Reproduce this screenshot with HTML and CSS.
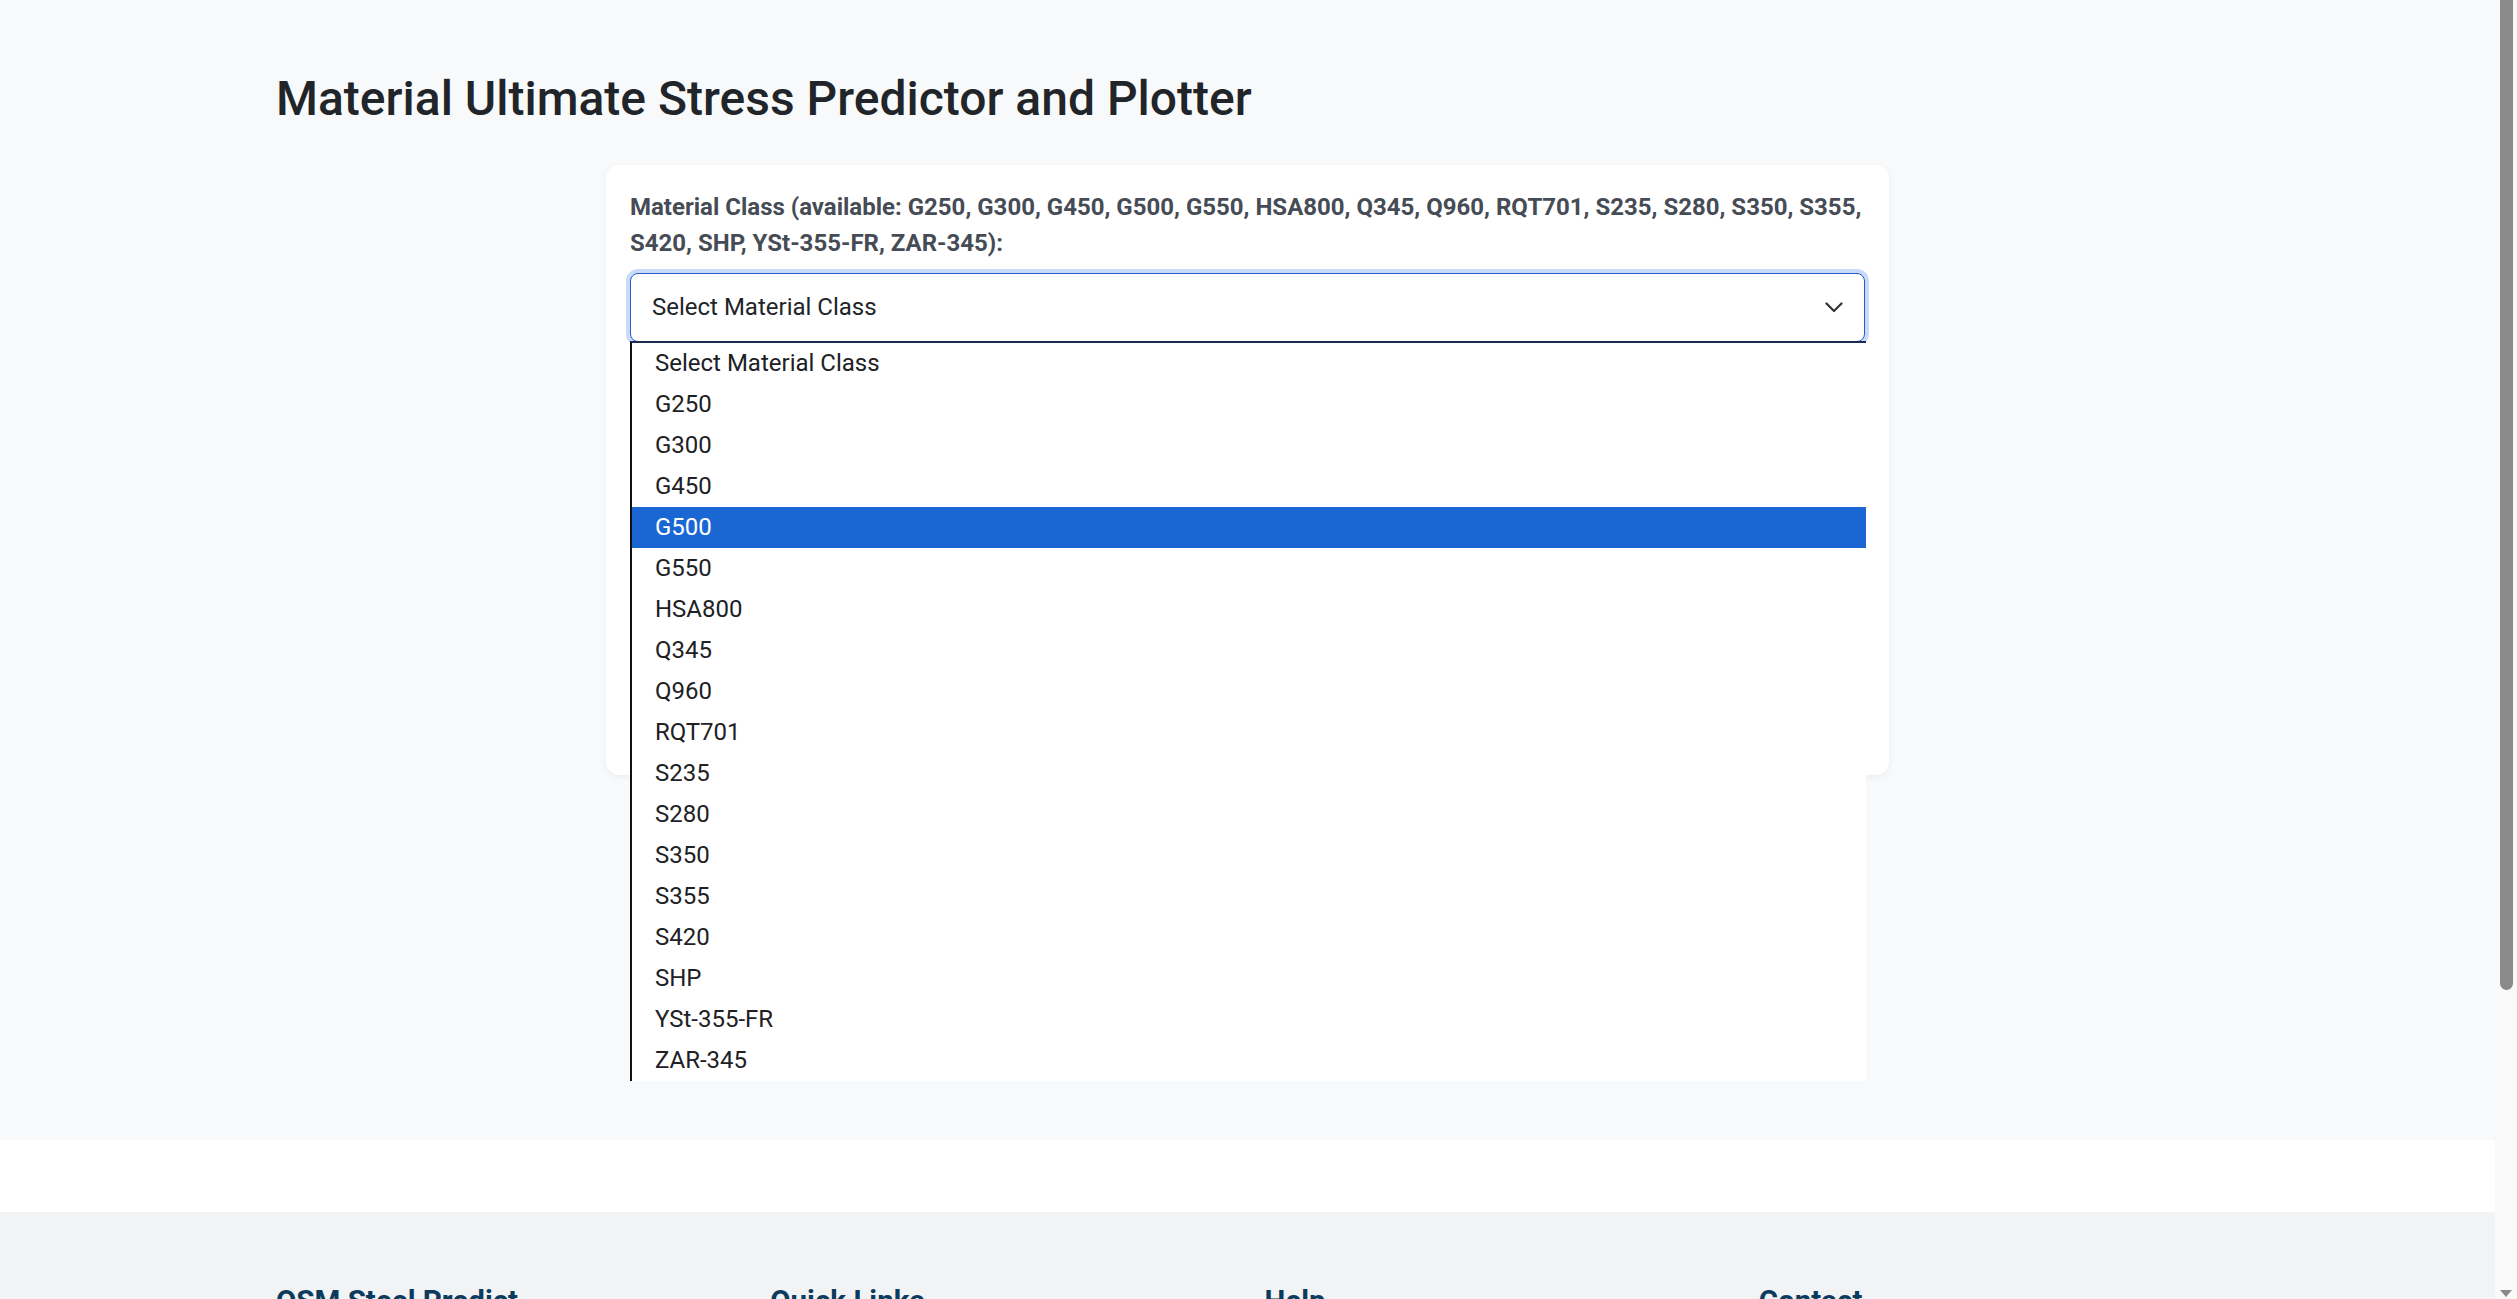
FILE: index.html
```html
<!DOCTYPE html>
<html lang="en">
<head>
<meta charset="utf-8">
<title>Material Ultimate Stress Predictor and Plotter</title>
<link rel="stylesheet" href="styles.css">
</head>
<body>
<main class="page">
  <div class="container">
    <h1 class="title">Material Ultimate Stress Predictor and Plotter</h1>
    <div class="card">
      <div class="form-group">
        <label class="label" for="material">Material Class (available: G250, G300, G450, G500, G550, HSA800, Q345, Q960, RQT701, S235, S280, S350, S355, S420, SHP, YSt-355-FR, ZAR-345):</label>
        <div class="select-wrap">
          <div class="select" id="material">
            <span class="select-text">Select Material Class</span>
            <svg class="chevron" width="18" height="11" viewBox="0 0 18 11"><polyline points="1.5,1.5 9,9 16.5,1.5" fill="none" stroke="#333" stroke-width="2.2" stroke-linecap="round" stroke-linejoin="round"/></svg>
          </div>
          <ul class="dropdown">
            <li class="option">Select Material Class</li>
            <li class="option">G250</li>
            <li class="option">G300</li>
            <li class="option">G450</li>
            <li class="option selected">G500</li>
            <li class="option">G550</li>
            <li class="option">HSA800</li>
            <li class="option">Q345</li>
            <li class="option">Q960</li>
            <li class="option">RQT701</li>
            <li class="option">S235</li>
            <li class="option">S280</li>
            <li class="option">S350</li>
            <li class="option">S355</li>
            <li class="option">S420</li>
            <li class="option">SHP</li>
            <li class="option">YSt-355-FR</li>
            <li class="option">ZAR-345</li>
          </ul>
        </div>
      </div>
    </div>
  </div>
</main>
<footer class="footer">
  <div class="container footer-grid">
    <div class="footer-col">
      <h3 class="footer-title">OSM Steel Predict</h3>
    </div>
    <div class="footer-col">
      <h3 class="footer-title">Quick Links</h3>
    </div>
    <div class="footer-col">
      <h3 class="footer-title">Help</h3>
    </div>
    <div class="footer-col">
      <h3 class="footer-title">Contact</h3>
    </div>
  </div>
</footer>
<div class="scrollbar" aria-hidden="true">
  <div class="scroll-thumb"></div>
  <div class="scroll-arrow"></div>
</div>
</body>
</html>
```

FILE: styles.css
```css
body {
  margin: 0 22px 0 0;
  background: #ffffff;
  font-family: Roboto, "Liberation Sans", Arial, sans-serif;
  color: #212529;
}
.page {
  background: #f8f9fa;
  padding: 70px 0 365px;
}
.container {
  max-width: 1943px;
  margin: 0 auto;
}
.title {
  margin: 0;
  font-size: 48px;
  line-height: 1.2;
  font-weight: 500;
  color: #212529;
}
.card {
  box-sizing: border-box;
  max-width: 1283px;
  height: 610px;
  margin: 37px auto 0;
  padding: 24px;
  background: #ffffff;
  border-radius: 13px;
  box-shadow: 0 2px 6px rgba(0, 0, 0, 0.05);
}
.label {
  display: block;
  font-size: 24px;
  line-height: 36px;
  font-weight: 700;
  color: #464c55;
  margin-bottom: 12px;
}
.select-wrap {
  position: relative;
}
.select {
  box-sizing: border-box;
  height: 69px;
  display: flex;
  align-items: center;
  justify-content: space-between;
  padding: 0 21px;
  border: 1.5px solid #2a5cc9;
  border-radius: 8px;
  background: #ffffff;
  box-shadow: 0 0 0 4px #c8dcfa;
  font-size: 24px;
  color: #212529;
}
.chevron {
  display: block;
}
.dropdown {
  position: absolute;
  top: 68px;
  left: 0;
  width: 1236px;
  box-sizing: border-box;
  margin: 0;
  padding: 0;
  list-style: none;
  background: #ffffff;
  border-left: 2px solid #111111;
  border-top: 2px solid #1d2b52;
  z-index: 10;
}
.option {
  height: 41px;
  line-height: 41px;
  padding-left: 23px;
  font-size: 24px;
  color: #202124;
}
.option.selected {
  background: #1a67d3;
  color: #ffffff;
}
.footer {
  margin-top: 72px;
  background: #f1f3f5;
  padding: 72px 0 300px;
}
.footer-grid {
  display: grid;
  grid-template-columns: repeat(4, 1fr);
  gap: 34px;
}
.footer-title {
  margin: 0;
  font-size: 29.5px;
  line-height: 1.2;
  font-weight: 700;
  color: #0c3b5d;
}
.scrollbar {
  position: fixed;
  top: 0;
  right: 0;
  width: 22px;
  height: 100vh;
  background: #f9f9f9;
  z-index: 100;
}
.scroll-thumb {
  margin-left: 5px;
  width: 13px;
  height: 990px;
  background: #8a8a8a;
  border-radius: 0 0 7px 7px;
}
.scroll-arrow {
  position: absolute;
  bottom: 2px;
  left: 5px;
  width: 0;
  height: 0;
  border-left: 6.5px solid transparent;
  border-right: 6.5px solid transparent;
  border-top: 7px solid #8a8a8a;
}
```
